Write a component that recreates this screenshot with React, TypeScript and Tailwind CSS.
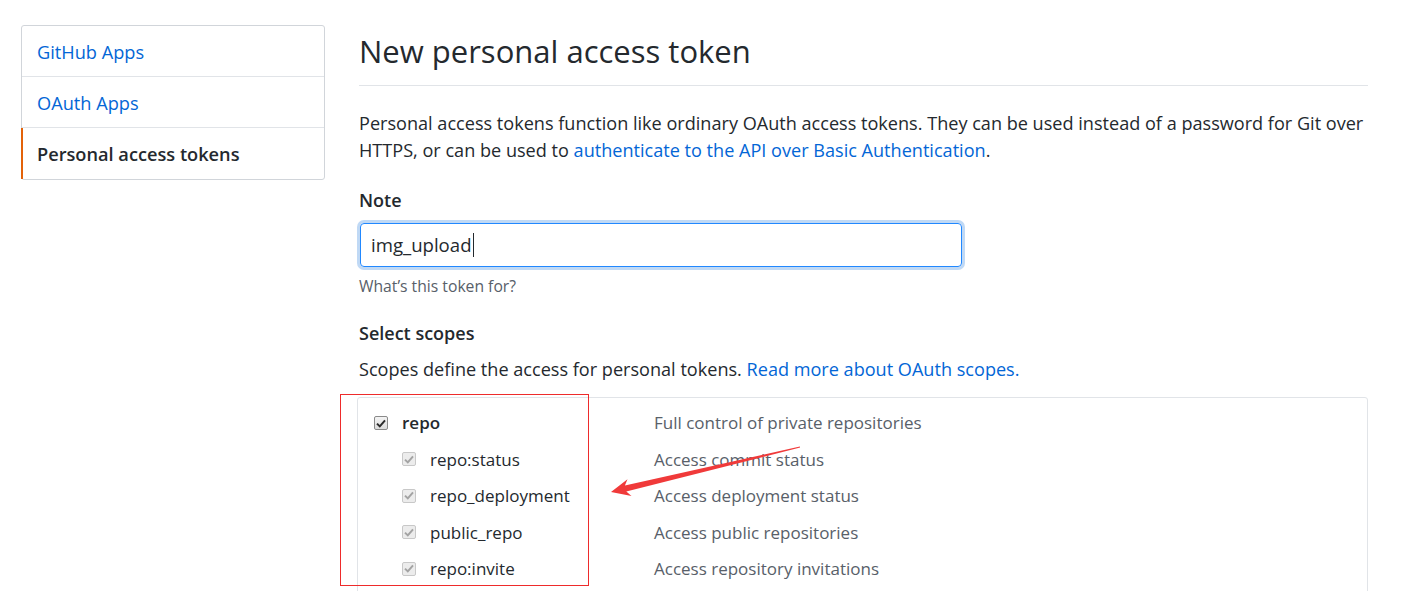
import React from 'react';

const font = { fontFamily: '"Open Sans", "Noto Sans", sans-serif' };

function Check({ disabled }: { disabled?: boolean }) {
  return (
    <span
      className={`inline-flex items-center justify-center w-[14px] h-[14px] rounded-[2px] border ${
        disabled ? 'border-[#c8c8c8] bg-[#ececec]' : 'border-[#8a8a8a] bg-gradient-to-b from-[#f4f4f4] to-[#dcdcdc]'
      }`}
    >
      <svg width="10" height="9" viewBox="0 0 10 9">
        <path
          d="M1 4.6 L3.8 7.4 L9 1.4"
          fill="none"
          stroke={disabled ? '#a3a3a3' : '#2b2b2b'}
          strokeWidth="2"
        />
      </svg>
    </span>
  );
}

const subScopes = [
  ['repo:status', 'Access commit status'],
  ['repo_deployment', 'Access deployment status'],
  ['public_repo', 'Access public repositories'],
  ['repo:invite', 'Access repository invitations'],
];

export default function App() {
  return (
    <div className="relative w-[1406px] h-[591px] overflow-hidden bg-white text-[#24292e]" style={font}>
      <div className="flex items-start pl-[21px] pt-[25px]">
        {/* sidebar */}
        <nav className="w-[304px] shrink-0 border border-[#d1d5da] rounded-[3px] text-[18.2px]">
          <a className="flex items-center h-[51px] pt-[3px] pl-[15px] text-[#0366d6] border-b border-[#e1e4e8]">GitHub Apps</a>
          <a className="flex items-center h-[51px] pt-[3px] pl-[15px] text-[#0366d6] border-b border-[#e1e4e8]">OAuth Apps</a>
          <a className="flex items-center h-[51px] pt-[3px] pl-[14px] font-semibold border-l-[2px] border-[#e36209] -ml-px">
            Personal access tokens
          </a>
        </nav>

        {/* main */}
        <main className="ml-[34px] w-[1009px]">
          <h2 className="text-[31px] leading-[40px] pt-[6px] pb-[14px] border-b border-[#e1e4e8]">
            New personal access token
          </h2>

          <p className="mt-[24px] text-[18.1px] leading-[27px]">
            Personal access tokens function like ordinary OAuth access tokens. They can be used instead of a password
            for Git over HTTPS, or can be used to{' '}
            <a className="text-[#0366d6]">authenticate to the API over Basic Authentication</a>.
          </p>

          <div className="mt-[24px] text-[18px] font-semibold leading-[24px]">Note</div>
          <div className="mt-[11px] w-[602px] h-[44px] ml-px rounded-[4px] border border-[#2188ff] shadow-[0_0_0_3px_rgba(3,102,214,0.25)] flex items-center px-[10px] text-[18.6px]">
            img_upload
            <span className="inline-block w-px h-[24px] bg-[#24292e] ml-[1px]" />
          </div>
          <div className="mt-[9px] text-[15.7px] text-[#586069] leading-[20px]">What’s this token for?</div>

          <div className="mt-[25px] text-[18px] font-semibold leading-[24px]">Select scopes</div>
          <p className="mt-[12px] text-[18.1px] leading-[24px]">
            Scopes define the access for personal tokens.{' '}
            <a className="text-[#0366d6]">Read more about OAuth scopes.</a>
          </p>

          <div className="mt-[16px] -ml-[2px] border border-[#e1e4e8] rounded-[3px] pt-[7px] pb-4 pl-[16px] text-[17px]">
            <div className="flex items-center h-[36px]">
              <div className="w-[280px] flex items-center gap-[14px]">
                <Check />
                <span className="font-semibold">repo</span>
              </div>
              <span className="text-[#586069]">Full control of private repositories</span>
            </div>
            {subScopes.map(([name, desc]) => (
              <div key={name} className="flex items-center h-[36.5px]">
                <div className="w-[280px] flex items-center gap-[14px] pl-[28px]">
                  <Check disabled />
                  <span>{name}</span>
                </div>
                <span className="text-[#586069]">{desc}</span>
              </div>
            ))}
          </div>
        </main>
      </div>

      {/* annotation overlay */}
      <svg className="absolute left-0 top-0 pointer-events-none" width="1406" height="591">
        <rect x="340.5" y="394.5" width="248" height="191" fill="none" stroke="#ee2b2b" strokeWidth="1" />
        <polygon
          points="611,492 631.5,495.9 626.3,491.4 800.1,447.6 799.9,446.4 624.9,485.6 627.5,479.3"
          fill="#f03a3a"
        />
      </svg>
    </div>
  );
}
